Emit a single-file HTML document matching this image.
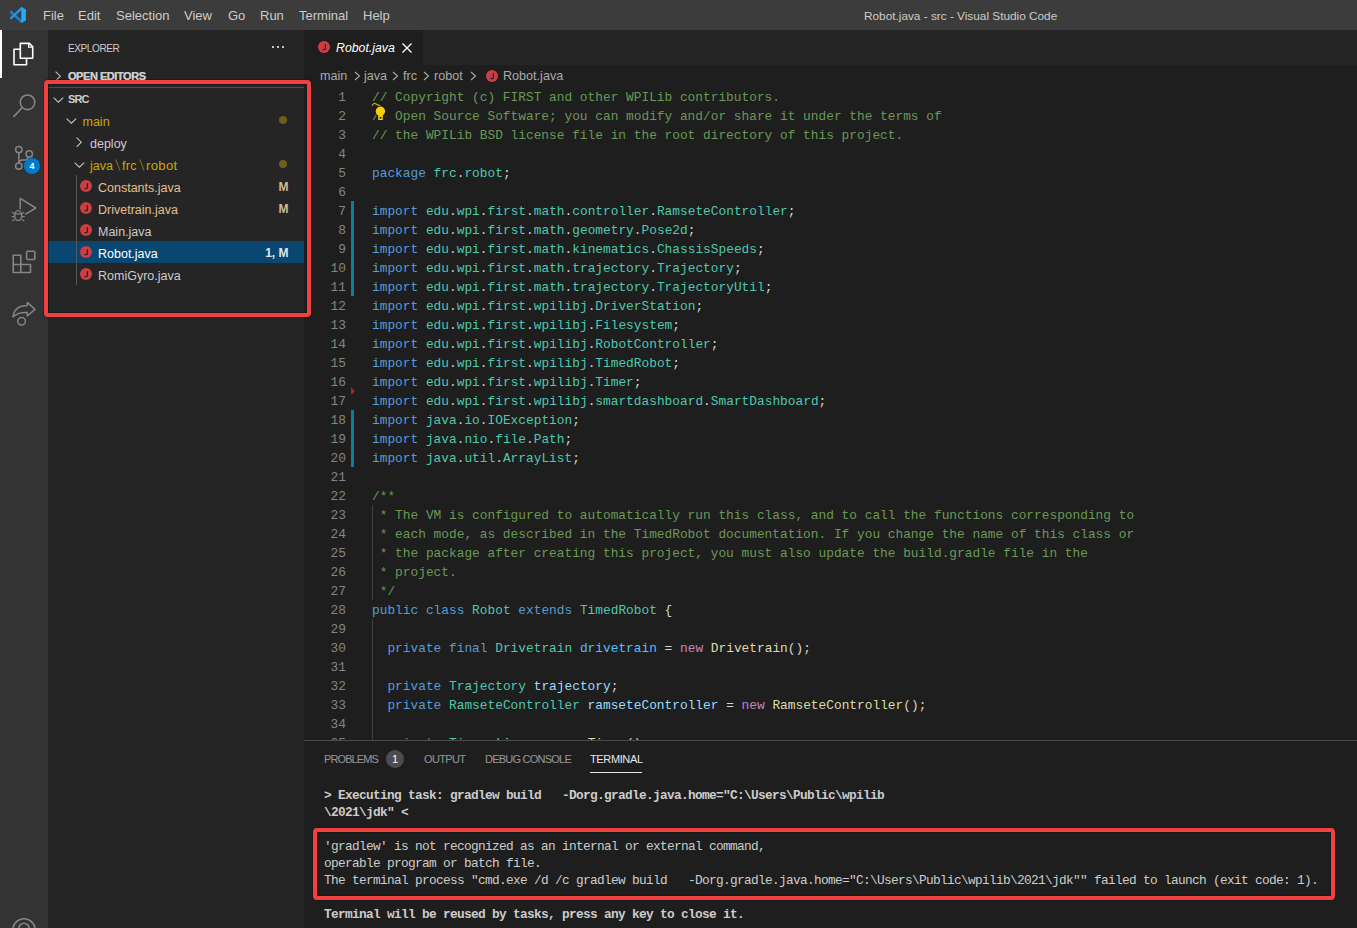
<!DOCTYPE html><html><head><meta charset="utf-8"><style>
*{margin:0;padding:0;box-sizing:border-box}
html,body{width:1357px;height:928px;overflow:hidden;background:#1e1e1e;font-family:"Liberation Sans",sans-serif;color:#cccccc}
.a{position:absolute}
.menu{position:absolute;top:8px;font-size:13px;color:#cccccc;line-height:16px;white-space:pre}
.code{position:absolute;left:372px;font-family:"Liberation Mono",monospace;font-size:12.83px;line-height:19px;height:19px;white-space:pre;color:#d4d4d4}
.ln{position:absolute;font-family:"Liberation Mono",monospace;font-size:12.83px;line-height:19px;height:19px;color:#858585;text-align:right;width:60px;left:287px;white-space:pre}
.c{color:#6a9955}.k{color:#569cd6}.t{color:#4ec9b0}.v{color:#9cdcfe}.f{color:#dcdcaa}.n{color:#c586c0}.cv{color:#4fc1ff}
.row{position:absolute;left:48px;width:256px;height:22px;line-height:22px;font-size:12.3px;white-space:pre}
.lbl{position:absolute;top:0}
.term{position:absolute;left:324px;margin-top:1px;font-family:"Liberation Mono",monospace;font-size:12.8px;letter-spacing:-0.68px;line-height:17px;height:17px;white-space:pre;color:#cccccc}
.b{font-weight:bold}
.red{position:absolute;border:4px solid #f2403f;border-radius:4px;box-shadow:0 0 0 1px rgba(10,20,20,0.45),inset 0 0 0 1px rgba(10,20,20,0.5)}
.jic{position:absolute;width:12px;height:12px;border-radius:50%;background:#cc3e44}
.ptab{position:absolute;top:752px;font-size:11px;line-height:14px;color:rgba(231,231,231,0.6);white-space:pre}
</style></head><body>
<div class="a" style="left:0;top:0;width:1357px;height:30px;background:#3c3c3c"></div>
<div class="a" style="left:0;top:30px;width:48px;height:898px;background:#333333"></div>
<div class="a" style="left:48px;top:30px;width:256px;height:898px;background:#252526"></div>
<div class="a" style="left:304px;top:30px;width:1053px;height:35px;background:#252526"></div>
<div class="a" style="left:304px;top:30px;width:119px;height:35px;background:#1e1e1e"></div>
<div class="a" style="left:304px;top:740px;width:1053px;height:1px;background:#4a4a4a"></div>
<svg class="a" style="left:10px;top:7px" width="16" height="16" viewBox="0 0 16 16">
<path d="M0.9 4.9 L11.6 14.7" stroke="#1583d6" stroke-width="2.5" stroke-linecap="round"/>
<path d="M0.9 11.1 L11.6 1.3" stroke="#1f96e6" stroke-width="2.5" stroke-linecap="round"/>
<path d="M11.3 0.1 L15.9 2.4 V13.6 L11.3 15.9 Z" fill="#26a9f4"/>
</svg>
<div class="menu" style="left:43px">File</div>
<div class="menu" style="left:78px">Edit</div>
<div class="menu" style="left:116px">Selection</div>
<div class="menu" style="left:184px">View</div>
<div class="menu" style="left:228px">Go</div>
<div class="menu" style="left:260px">Run</div>
<div class="menu" style="left:299px">Terminal</div>
<div class="menu" style="left:363px">Help</div>
<div class="menu" style="left:864px;font-size:11.8px">Robot.java - src - Visual Studio Code</div>
<div class="a" style="left:0;top:30px;width:2px;height:48px;background:#ffffff"></div>
<svg class="a" style="left:0;top:30px" width="48" height="310" viewBox="0 30 48 310" fill="none" stroke-width="1.6">
<path d="M20.3 43.4 H29.4 L32.7 46.7 V58.2 H20.3 Z" stroke="#ffffff" stroke-width="1.6" stroke-linejoin="round"/>
<path d="M28.7 43.4 V47.1 H32.7" stroke="#ffffff" stroke-width="1.3"/>
<path d="M20.3 49.3 H14 V64.8 H26.5 V58.2" stroke="#ffffff" stroke-width="1.6" stroke-linejoin="round"/>
<circle cx="27.5" cy="102.3" r="7.3" stroke="#858585"/>
<path d="M22.3 107.5 L13.5 116.8" stroke="#858585" stroke-width="1.7"/>
<circle cx="18.8" cy="149.6" r="3.2" stroke="#858585" stroke-width="1.5"/>
<circle cx="29.2" cy="153.9" r="3.2" stroke="#858585" stroke-width="1.5"/>
<circle cx="18.8" cy="166.1" r="3.2" stroke="#858585" stroke-width="1.5"/>
<path d="M18.8 153 V162.8 M18.8 163 Q19.2 160 22.5 160 H25.3 Q27.6 160 28.1 157.2" stroke="#858585" stroke-width="1.5"/>
<path d="M20.2 209.3 V198.4 L35.8 208 L25.2 214.3" stroke="#858585" stroke-width="1.5" stroke-linejoin="round"/>
<ellipse cx="18.2" cy="215.6" rx="3.5" ry="5" stroke="#858585" stroke-width="1.4"/>
<path d="M12.1 212.2 L14.6 213.6 M24.3 212.2 L21.8 213.6 M11.7 216.7 H14.7 M24.7 216.7 H21.7 M12.1 221 L14.6 219.6 M24.3 221 L21.8 219.6 M14.8 213.9 H21.6" stroke="#858585" stroke-width="1.2"/>
<path d="M13.2 255.2 H20.8 V264.5 H30.5 V272.5 H13.2 Z M13.2 264.5 H20.8 V272.5" stroke="#858585" stroke-width="1.6" stroke-linejoin="round"/>
<rect x="26.6" y="251.3" width="8.2" height="8.2" rx="1" stroke="#858585" stroke-width="1.6"/>
<path d="M13 317 C14 309 20 305.5 27.3 305.5 V302.4 L35 309.4 L27.3 316 V312.5 C21 312.3 16 313.5 13 317 Z" stroke="#858585" stroke-width="1.5" stroke-linejoin="round"/>
<circle cx="21.6" cy="321.3" r="3.8" stroke="#858585" stroke-width="1.5"/>
</svg>
<div class="a" style="left:24px;top:158px;width:16px;height:16px;border-radius:50%;background:#007acc;color:#fff;font-size:9px;font-weight:bold;text-align:center;line-height:16px">4</div>
<svg class="a" style="left:0;top:900px" width="48" height="28" fill="none" stroke="#858585" stroke-width="1.6">
<circle cx="24" cy="30" r="11.2"/><circle cx="24" cy="28.5" r="5.2"/></svg>
<div class="a" style="left:68px;top:41px;font-size:11px;line-height:14px;letter-spacing:-0.5px;transform:scaleX(0.92);transform-origin:0 0;white-space:pre">EXPLORER</div>
<div class="a" style="left:272px;top:46px;width:2px;height:2px;background:#c5c5c5"></div>
<div class="a" style="left:277px;top:46px;width:2px;height:2px;background:#c5c5c5"></div>
<div class="a" style="left:282px;top:46px;width:2px;height:2px;background:#c5c5c5"></div>
<svg class="a" style="left:55px;top:70.5px" width="8" height="12" fill="none" stroke="#c5c5c5" stroke-width="1.05"><path d="M0.6 0.6 L5.3 5.2 L0.6 9.8"/></svg>
<div class="a" style="left:68px;top:69px;font-size:11px;line-height:14px;font-weight:bold;letter-spacing:-0.45px;white-space:pre;background:transparent">OPEN EDITORS</div>
<div class="a" style="left:48px;top:87px;width:256px;height:1px;background:#4b4b4c"></div>
<svg class="a" style="left:52.5px;top:96.5px" width="12" height="8" fill="none" stroke="#c5c5c5" stroke-width="1.05"><path d="M0.6 0.6 L5.4 5.2 L10.2 0.6"/></svg>
<div class="a" style="left:68px;top:92px;font-size:11px;line-height:14px;font-weight:bold;letter-spacing:-0.9px;white-space:pre">SRC</div>
<svg class="a" style="left:65.5px;top:117.5px" width="12" height="8" fill="none" stroke="#c5c5c5" stroke-width="1.05"><path d="M0.6 0.6 L5.4 5.2 L10.2 0.6"/></svg>
<div class="a" style="left:82.5px;top:110.5px;line-height:22px;font-size:12.5px;color:#cca700;white-space:pre">main</div>
<div class="a" style="left:279px;top:116px;width:8px;height:8px;border-radius:50%;background:#6e5e1a"></div>
<svg class="a" style="left:76px;top:136.5px" width="8" height="12" fill="none" stroke="#c5c5c5" stroke-width="1.05"><path d="M0.6 0.6 L5.3 5.2 L0.6 9.8"/></svg>
<div class="a" style="left:90px;top:132.5px;line-height:22px;font-size:12.5px;color:#cccccc;white-space:pre">deploy</div>
<svg class="a" style="left:73.5px;top:161.5px" width="12" height="8" fill="none" stroke="#c5c5c5" stroke-width="1.05"><path d="M0.6 0.6 L5.4 5.2 L10.2 0.6"/></svg>
<div class="a" style="left:90px;top:154.5px;line-height:22px;font-size:12.5px;letter-spacing:0px;color:#cca700;white-space:pre">java</div>
<div class="a" style="left:122px;top:154.5px;line-height:22px;font-size:12.5px;letter-spacing:0.3px;color:#cca700;white-space:pre">frc</div>
<div class="a" style="left:146px;top:154.5px;line-height:22px;font-size:13.1px;letter-spacing:0.35px;color:#cca700;white-space:pre">robot</div>
<svg class="a" style="left:115px;top:159px" width="6" height="13"><path d="M0.8 0.5 L5 11.5" stroke="#7a6a22" stroke-width="1.1"/></svg>
<svg class="a" style="left:139px;top:159px" width="6" height="13"><path d="M0.8 0.5 L5 11.5" stroke="#7a6a22" stroke-width="1.1"/></svg>
<div class="a" style="left:279px;top:160px;width:8px;height:8px;border-radius:50%;background:#6e5e1a"></div>
<div class="a" style="left:76px;top:175px;width:1px;height:110px;background:#585858"></div>
<div class="jic" style="left:80px;top:180px"></div>
<svg class="a" style="left:80px;top:180px" width="12" height="12" fill="none" stroke="#222" stroke-width="1.25"><path d="M7.4 3.2 V7.5 Q7.4 8.7 6.3 8.7 H4.5"/></svg>
<div class="a" style="left:98px;top:176.5px;line-height:22px;font-size:12.5px;color:#e2c08d;white-space:pre">Constants.java</div>
<div class="a" style="right:1068.5px;top:175.5px;line-height:22px;font-size:12px;font-weight:bold;color:#d3b98c;white-space:pre">M</div>
<div class="jic" style="left:80px;top:202px"></div>
<svg class="a" style="left:80px;top:202px" width="12" height="12" fill="none" stroke="#222" stroke-width="1.25"><path d="M7.4 3.2 V7.5 Q7.4 8.7 6.3 8.7 H4.5"/></svg>
<div class="a" style="left:98px;top:198.5px;line-height:22px;font-size:12.5px;color:#e2c08d;white-space:pre">Drivetrain.java</div>
<div class="a" style="right:1068.5px;top:197.5px;line-height:22px;font-size:12px;font-weight:bold;color:#d3b98c;white-space:pre">M</div>
<div class="jic" style="left:80px;top:224px"></div>
<svg class="a" style="left:80px;top:224px" width="12" height="12" fill="none" stroke="#222" stroke-width="1.25"><path d="M7.4 3.2 V7.5 Q7.4 8.7 6.3 8.7 H4.5"/></svg>
<div class="a" style="left:98px;top:220.5px;line-height:22px;font-size:12.5px;color:#cccccc;white-space:pre">Main.java</div>
<div class="a" style="left:48px;top:241px;width:256px;height:22px;background:#094771"></div>
<div class="a" style="left:76px;top:241px;width:1px;height:22px;background:#585858"></div>
<div class="jic" style="left:80px;top:246px"></div>
<svg class="a" style="left:80px;top:246px" width="12" height="12" fill="none" stroke="#222" stroke-width="1.25"><path d="M7.4 3.2 V7.5 Q7.4 8.7 6.3 8.7 H4.5"/></svg>
<div class="a" style="left:98px;top:242.5px;line-height:22px;font-size:12.5px;color:#ffffff;white-space:pre">Robot.java</div>
<div class="a" style="right:1068.5px;top:241.5px;line-height:22px;font-size:12px;font-weight:bold;color:#dfe6ec;white-space:pre">1, M</div>
<div class="jic" style="left:80px;top:268px"></div>
<svg class="a" style="left:80px;top:268px" width="12" height="12" fill="none" stroke="#222" stroke-width="1.25"><path d="M7.4 3.2 V7.5 Q7.4 8.7 6.3 8.7 H4.5"/></svg>
<div class="a" style="left:98px;top:264.5px;line-height:22px;font-size:12.5px;color:#cccccc;white-space:pre">RomiGyro.java</div>
<div class="jic" style="left:318px;top:41px"></div>
<svg class="a" style="left:318px;top:41px" width="12" height="12" fill="none" stroke="#222" stroke-width="1.25"><path d="M7.4 3.2 V7.5 Q7.4 8.7 6.3 8.7 H4.5"/></svg>
<div class="a" style="left:336px;top:40px;font-size:12.3px;line-height:16px;font-style:italic;color:#ffffff;white-space:pre">Robot.java</div>
<svg class="a" style="left:401px;top:42px" width="12" height="12" fill="none" stroke="#ffffff" stroke-width="1.3"><path d="M1.5 1.5 L10.5 10.5 M10.5 1.5 L1.5 10.5"/></svg>
<div class="a" style="left:320px;top:68px;font-size:12.6px;line-height:16px;color:#a9a9a9;white-space:pre">main</div>
<div class="a" style="left:364px;top:68px;font-size:12.6px;line-height:16px;color:#a9a9a9;white-space:pre">java</div>
<div class="a" style="left:403px;top:68px;font-size:12.6px;line-height:16px;color:#a9a9a9;white-space:pre">frc</div>
<div class="a" style="left:434px;top:68px;font-size:12.6px;line-height:16px;color:#a9a9a9;white-space:pre">robot</div>
<svg class="a" style="left:354px;top:71px" width="7" height="10" fill="none" stroke="#a9a9a9" stroke-width="1.1"><path d="M1 1 L5.5 5 L1 9"/></svg>
<svg class="a" style="left:392px;top:71px" width="7" height="10" fill="none" stroke="#a9a9a9" stroke-width="1.1"><path d="M1 1 L5.5 5 L1 9"/></svg>
<svg class="a" style="left:423px;top:71px" width="7" height="10" fill="none" stroke="#a9a9a9" stroke-width="1.1"><path d="M1 1 L5.5 5 L1 9"/></svg>
<svg class="a" style="left:470px;top:71px" width="7" height="10" fill="none" stroke="#a9a9a9" stroke-width="1.1"><path d="M1 1 L5.5 5 L1 9"/></svg>
<div class="jic" style="left:486px;top:70px"></div>
<svg class="a" style="left:486px;top:70px" width="12" height="12" fill="none" stroke="#222" stroke-width="1.25"><path d="M7.4 3.2 V7.5 Q7.4 8.7 6.3 8.7 H4.5"/></svg>
<div class="a" style="left:503px;top:68px;font-size:12.6px;line-height:16px;color:#a9a9a9;white-space:pre">Robot.java</div>
<div class="a" style="left:304px;top:87px;width:1053px;height:653px;overflow:hidden"><div class="a" style="left:0;top:1px;width:1053px;height:700px">
<div class="ln" style="left:-18px;top:0px">1</div>
<div class="code" style="left:68px;top:0px"><span class="c">// Copyright (c) FIRST and other WPILib contributors.</span></div>
<div class="ln" style="left:-18px;top:19px">2</div>
<div class="code" style="left:68px;top:19px"><span class="c">// Open Source Software; you can modify and/or share it under the terms of</span></div>
<div class="ln" style="left:-18px;top:38px">3</div>
<div class="code" style="left:68px;top:38px"><span class="c">// the WPILib BSD license file in the root directory of this project.</span></div>
<div class="ln" style="left:-18px;top:57px">4</div>
<div class="code" style="left:68px;top:57px"></div>
<div class="ln" style="left:-18px;top:76px">5</div>
<div class="code" style="left:68px;top:76px"><span class="k">package</span> <span class="t">frc</span>.<span class="t">robot</span>;</div>
<div class="ln" style="left:-18px;top:95px">6</div>
<div class="code" style="left:68px;top:95px"></div>
<div class="ln" style="left:-18px;top:114px">7</div>
<div class="code" style="left:68px;top:114px"><span class="k">import</span> <span class="t">edu</span>.<span class="t">wpi</span>.<span class="t">first</span>.<span class="t">math</span>.<span class="t">controller</span>.<span class="t">RamseteController</span>;</div>
<div class="ln" style="left:-18px;top:133px">8</div>
<div class="code" style="left:68px;top:133px"><span class="k">import</span> <span class="t">edu</span>.<span class="t">wpi</span>.<span class="t">first</span>.<span class="t">math</span>.<span class="t">geometry</span>.<span class="t">Pose2d</span>;</div>
<div class="ln" style="left:-18px;top:152px">9</div>
<div class="code" style="left:68px;top:152px"><span class="k">import</span> <span class="t">edu</span>.<span class="t">wpi</span>.<span class="t">first</span>.<span class="t">math</span>.<span class="t">kinematics</span>.<span class="t">ChassisSpeeds</span>;</div>
<div class="ln" style="left:-18px;top:171px">10</div>
<div class="code" style="left:68px;top:171px"><span class="k">import</span> <span class="t">edu</span>.<span class="t">wpi</span>.<span class="t">first</span>.<span class="t">math</span>.<span class="t">trajectory</span>.<span class="t">Trajectory</span>;</div>
<div class="ln" style="left:-18px;top:190px">11</div>
<div class="code" style="left:68px;top:190px"><span class="k">import</span> <span class="t">edu</span>.<span class="t">wpi</span>.<span class="t">first</span>.<span class="t">math</span>.<span class="t">trajectory</span>.<span class="t">TrajectoryUtil</span>;</div>
<div class="ln" style="left:-18px;top:209px">12</div>
<div class="code" style="left:68px;top:209px"><span class="k">import</span> <span class="t">edu</span>.<span class="t">wpi</span>.<span class="t">first</span>.<span class="t">wpilibj</span>.<span class="t">DriverStation</span>;</div>
<div class="ln" style="left:-18px;top:228px">13</div>
<div class="code" style="left:68px;top:228px"><span class="k">import</span> <span class="t">edu</span>.<span class="t">wpi</span>.<span class="t">first</span>.<span class="t">wpilibj</span>.<span class="t">Filesystem</span>;</div>
<div class="ln" style="left:-18px;top:247px">14</div>
<div class="code" style="left:68px;top:247px"><span class="k">import</span> <span class="t">edu</span>.<span class="t">wpi</span>.<span class="t">first</span>.<span class="t">wpilibj</span>.<span class="t">RobotController</span>;</div>
<div class="ln" style="left:-18px;top:266px">15</div>
<div class="code" style="left:68px;top:266px"><span class="k">import</span> <span class="t">edu</span>.<span class="t">wpi</span>.<span class="t">first</span>.<span class="t">wpilibj</span>.<span class="t">TimedRobot</span>;</div>
<div class="ln" style="left:-18px;top:285px">16</div>
<div class="code" style="left:68px;top:285px"><span class="k">import</span> <span class="t">edu</span>.<span class="t">wpi</span>.<span class="t">first</span>.<span class="t">wpilibj</span>.<span class="t">Timer</span>;</div>
<div class="ln" style="left:-18px;top:304px">17</div>
<div class="code" style="left:68px;top:304px"><span class="k">import</span> <span class="t">edu</span>.<span class="t">wpi</span>.<span class="t">first</span>.<span class="t">wpilibj</span>.<span class="t">smartdashboard</span>.<span class="t">SmartDashboard</span>;</div>
<div class="ln" style="left:-18px;top:323px">18</div>
<div class="code" style="left:68px;top:323px"><span class="k">import</span> <span class="t">java</span>.<span class="t">io</span>.<span class="t">IOException</span>;</div>
<div class="ln" style="left:-18px;top:342px">19</div>
<div class="code" style="left:68px;top:342px"><span class="k">import</span> <span class="t">java</span>.<span class="t">nio</span>.<span class="t">file</span>.<span class="t">Path</span>;</div>
<div class="ln" style="left:-18px;top:361px">20</div>
<div class="code" style="left:68px;top:361px"><span class="k">import</span> <span class="t">java</span>.<span class="t">util</span>.<span class="t">ArrayList</span>;</div>
<div class="ln" style="left:-18px;top:380px">21</div>
<div class="code" style="left:68px;top:380px"></div>
<div class="ln" style="left:-18px;top:399px">22</div>
<div class="code" style="left:68px;top:399px"><span class="c">/**</span></div>
<div class="ln" style="left:-18px;top:418px">23</div>
<div class="code" style="left:68px;top:418px"><span class="c"> * The VM is configured to automatically run this class, and to call the functions corresponding to</span></div>
<div class="ln" style="left:-18px;top:437px">24</div>
<div class="code" style="left:68px;top:437px"><span class="c"> * each mode, as described in the TimedRobot documentation. If you change the name of this class or</span></div>
<div class="ln" style="left:-18px;top:456px">25</div>
<div class="code" style="left:68px;top:456px"><span class="c"> * the package after creating this project, you must also update the build.gradle file in the</span></div>
<div class="ln" style="left:-18px;top:475px">26</div>
<div class="code" style="left:68px;top:475px"><span class="c"> * project.</span></div>
<div class="ln" style="left:-18px;top:494px">27</div>
<div class="code" style="left:68px;top:494px"><span class="c"> */</span></div>
<div class="ln" style="left:-18px;top:513px">28</div>
<div class="code" style="left:68px;top:513px"><span class="k">public</span> <span class="k">class</span> <span class="t">Robot</span> <span class="k">extends</span> <span class="t">TimedRobot</span> {</div>
<div class="ln" style="left:-18px;top:532px">29</div>
<div class="code" style="left:68px;top:532px"></div>
<div class="ln" style="left:-18px;top:551px">30</div>
<div class="code" style="left:68px;top:551px">  <span class="k">private</span> <span class="k">final</span> <span class="t">Drivetrain</span> <span class="cv">drivetrain</span> = <span class="n">new</span> <span class="f">Drivetrain</span>();</div>
<div class="ln" style="left:-18px;top:570px">31</div>
<div class="code" style="left:68px;top:570px"></div>
<div class="ln" style="left:-18px;top:589px">32</div>
<div class="code" style="left:68px;top:589px">  <span class="k">private</span> <span class="t">Trajectory</span> <span class="v">trajectory</span>;</div>
<div class="ln" style="left:-18px;top:608px">33</div>
<div class="code" style="left:68px;top:608px">  <span class="k">private</span> <span class="t">RamseteController</span> <span class="v">ramseteController</span> = <span class="n">new</span> <span class="f">RamseteController</span>();</div>
<div class="ln" style="left:-18px;top:627px">34</div>
<div class="code" style="left:68px;top:627px"></div>
<div class="ln" style="left:-18px;top:646px">35</div>
<div class="code" style="left:68px;top:646px">  <span class="k">private</span> <span class="t">Timer</span> <span class="v">timer</span> = <span class="n">new</span> <span class="f">Timer</span>();</div>
<div class="a" style="left:47px;top:113px;width:3px;height:95px;background:#0c7d9d"></div>
<div class="a" style="left:47px;top:322px;width:3px;height:57px;background:#0c7d9d"></div>
<svg class="a" style="left:47px;top:299px" width="5" height="8"><path d="M0 0 L4 4 L0 8 Z" fill="#a4262c"/></svg>
<div class="a" style="left:68px;top:417px;width:1px;height:95px;background:#404040"></div>
<div class="a" style="left:68px;top:531px;width:1px;height:133px;background:#404040"></div>
</div></div>
<svg class="a" style="left:368px;top:100px" width="20" height="24" viewBox="368 100 20 24">
<path d="M372 105.8 Q374 102.2 376 104 Q378 105.8 380.2 105" fill="none" stroke="#d7ac00" stroke-width="1.1"/>
<rect x="376.6" y="106.2" width="11.4" height="15" fill="#1e1e1e"/>
<circle cx="380.4" cy="111.2" r="4.7" fill="#ffcc00"/>
<rect x="378.2" y="114.5" width="4.6" height="5.5" fill="#ffcc00"/>
<rect x="379.7" y="117" width="1.7" height="1.7" fill="#1e1e1e"/>
</svg>
<div class="ptab" style="left:324px;letter-spacing:-0.89px">PROBLEMS</div>
<div class="a" style="left:386px;top:750px;width:18px;height:18px;border-radius:50%;background:#4d4d4d;color:#fff;font-size:11px;line-height:18px;text-align:center">1</div>
<div class="ptab" style="left:424px;letter-spacing:-0.63px">OUTPUT</div>
<div class="ptab" style="left:485px;letter-spacing:-0.77px">DEBUG CONSOLE</div>
<div class="ptab" style="left:590px;color:#e7e7e7;letter-spacing:-0.375px">TERMINAL</div>
<div class="a" style="left:590px;top:772px;width:52px;height:1px;background:#e7e7e7"></div>
<div class="term b" style="top:786px">&gt; Executing task: gradlew build   -Dorg.gradle.java.home="C:\Users\Public\wpilib</div>
<div class="term b" style="top:803px">\2021\jdk" &lt;</div>
<div class="term" style="top:837px">'gradlew' is not recognized as an internal or external command,</div>
<div class="term" style="top:854px">operable program or batch file.</div>
<div class="term" style="top:871px">The terminal process "cmd.exe /d /c gradlew build   -Dorg.gradle.java.home="C:\Users\Public\wpilib\2021\jdk"" failed to launch (exit code: 1).</div>
<div class="term b" style="top:905px">Terminal will be reused by tasks, press any key to close it.</div>
<div class="red" style="left:44px;top:80px;width:267px;height:237px"></div>
<div class="red" style="left:313px;top:828px;width:1022px;height:72px"></div>
<div class="a" style="left:68px;top:69px;font-size:11px;line-height:14px;font-weight:bold;letter-spacing:-0.45px;white-space:pre;background:transparent">OPEN EDITORS</div>
</body></html>
